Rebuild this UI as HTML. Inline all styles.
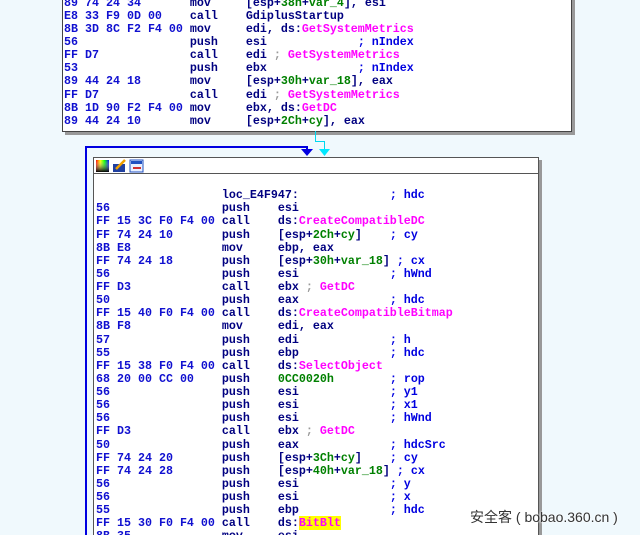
<!DOCTYPE html>
<html><head><meta charset="utf-8"><style>
html,body{margin:0;padding:0;width:640px;height:535px;overflow:hidden;background:#f0f9fd;position:relative}
pre{margin:0;font-family:"Liberation Mono",monospace;font-size:11.67px;line-height:13.12px;font-weight:bold;color:#000080;position:absolute;white-space:pre}
.b{color:#1010d0}.n{color:#ff00ff}.g{color:#008000}.c{color:#0000e0}.s{color:#999}
.y{background:#ffff00}
.box1{position:absolute;left:62px;top:-5px;width:508px;height:135px;background:#fff;border:1px solid #444;box-shadow:3px 3px 0 #999}
.blue{position:absolute;background:#0000e0}
.win{position:absolute;left:93px;top:157px;width:444px;height:390px;background:#fff;border:1px solid #555;box-shadow:3px 3px 0 #999}
.tb{position:absolute;left:0;top:0;width:444px;height:15px;border-bottom:1px solid #555}
</style></head><body>
<div class="box1"></div>
<pre style="left:64px;top:-3.3px"><span class="b">89 74 24 34       </span>mov     [esp+<span class="g">38h</span>+<span class="g">var_4</span>], esi
<span class="b">E8 33 F9 0D 00    </span>call    GdiplusStartup
<span class="b">8B 3D 8C F2 F4 00 </span>mov     edi, ds:<span class="n">GetSystemMetrics</span>
<span class="b">56                </span>push    esi             <span class="c">; nIndex</span>
<span class="b">FF D7             </span>call    edi <span class="s">;</span> <span class="n">GetSystemMetrics</span>
<span class="b">53                </span>push    ebx             <span class="c">; nIndex</span>
<span class="b">89 44 24 18       </span>mov     [esp+<span class="g">30h</span>+<span class="g">var_18</span>], eax
<span class="b">FF D7             </span>call    edi <span class="s">;</span> <span class="n">GetSystemMetrics</span>
<span class="b">8B 1D 90 F2 F4 00 </span>mov     ebx, ds:<span class="n">GetDC</span>
<span class="b">89 44 24 10       </span>mov     [esp+<span class="g">2Ch</span>+<span class="g">cy</span>], eax</pre>

<div class="blue" style="left:85px;top:146px;width:223px;height:2px"></div>
<div class="blue" style="left:85px;top:146px;width:2px;height:400px"></div>
<div class="blue" style="left:306px;top:146px;width:2px;height:6px"></div>
<svg style="position:absolute;left:301px;top:149px" width="12" height="8"><polygon points="0,0 12,0 6,7" fill="#0000e0"/></svg>
<div style="position:absolute;left:315px;top:131px;width:1px;height:11px;background:#00d8f0"></div>
<div style="position:absolute;left:315px;top:141px;width:10px;height:1px;background:#00d8f0"></div>
<div style="position:absolute;left:324px;top:141px;width:1px;height:10px;background:#00d8f0"></div>
<svg style="position:absolute;left:319px;top:149px" width="12" height="8"><polygon points="0,0 11,0 5.5,7" fill="#00e8ff"/></svg>

<div class="win"><div class="tb">
<svg style="position:absolute;left:1px;top:1px" width="50" height="14">
<defs><linearGradient id="g1" x1="0" x2="1"><stop offset="0" stop-color="#f00"/><stop offset=".33" stop-color="#ff0"/><stop offset=".66" stop-color="#0f0"/><stop offset="1" stop-color="#00f"/></linearGradient><linearGradient id="g2" x1="0" y1="0" x2="0" y2="1"><stop offset="0" stop-color="#fff" stop-opacity="0"/><stop offset="1" stop-color="#000"/></linearGradient></defs>
<rect x="1" y="1" width="13" height="12" fill="url(#g1)"/><rect x="1" y="1" width="13" height="12" fill="url(#g2)"/>
<rect x="18" y="5" width="12" height="8" fill="#2040a0"/><line x1="21" y1="10" x2="30" y2="1" stroke="#f0a000" stroke-width="2.5"/>
<rect x="35" y="1" width="13" height="12" fill="#e8f0ff" stroke="#2050c0"/><rect x="36" y="2" width="11" height="3" fill="#2050c0"/><rect x="38" y="8" width="8" height="2" fill="#d03030"/>
</svg></div></div>

<pre style="left:96px;top:189.2px"><span class="b">                  </span>loc_E4F947:             <span class="c">; hdc</span>
<span class="b">56                </span>push    esi
<span class="b">FF 15 3C F0 F4 00 </span>call    ds:<span class="n">CreateCompatibleDC</span>
<span class="b">FF 74 24 10       </span>push    [esp+<span class="g">2Ch</span>+<span class="g">cy</span>]    <span class="c">; cy</span>
<span class="b">8B E8             </span>mov     ebp, eax
<span class="b">FF 74 24 18       </span>push    [esp+<span class="g">30h</span>+<span class="g">var_18</span>] <span class="c">; cx</span>
<span class="b">56                </span>push    esi             <span class="c">; hWnd</span>
<span class="b">FF D3             </span>call    ebx <span class="s">;</span> <span class="n">GetDC</span>
<span class="b">50                </span>push    eax             <span class="c">; hdc</span>
<span class="b">FF 15 40 F0 F4 00 </span>call    ds:<span class="n">CreateCompatibleBitmap</span>
<span class="b">8B F8             </span>mov     edi, eax
<span class="b">57                </span>push    edi             <span class="c">; h</span>
<span class="b">55                </span>push    ebp             <span class="c">; hdc</span>
<span class="b">FF 15 38 F0 F4 00 </span>call    ds:<span class="n">SelectObject</span>
<span class="b">68 20 00 CC 00    </span>push    <span class="g">0CC0020h</span>        <span class="c">; rop</span>
<span class="b">56                </span>push    esi             <span class="c">; y1</span>
<span class="b">56                </span>push    esi             <span class="c">; x1</span>
<span class="b">56                </span>push    esi             <span class="c">; hWnd</span>
<span class="b">FF D3             </span>call    ebx <span class="s">;</span> <span class="n">GetDC</span>
<span class="b">50                </span>push    eax             <span class="c">; hdcSrc</span>
<span class="b">FF 74 24 20       </span>push    [esp+<span class="g">3Ch</span>+<span class="g">cy</span>]    <span class="c">; cy</span>
<span class="b">FF 74 24 28       </span>push    [esp+<span class="g">40h</span>+<span class="g">var_18</span>] <span class="c">; cx</span>
<span class="b">56                </span>push    esi             <span class="c">; y</span>
<span class="b">56                </span>push    esi             <span class="c">; x</span>
<span class="b">55                </span>push    ebp             <span class="c">; hdc</span>
<span class="b">FF 15 30 F0 F4 00 </span>call    ds:<span class="n y">BitBlt</span>
<span class="b">8B 35             </span>mov     esi</pre>

<div style="position:absolute;left:470px;top:507px;font-family:'Liberation Sans','Noto Sans CJK SC',sans-serif;font-size:14px;color:#333;white-space:nowrap;text-shadow:0 0 2px #fff,0 0 2px #fff">安全客 ( bobao.360.cn )</div>
</body></html>
